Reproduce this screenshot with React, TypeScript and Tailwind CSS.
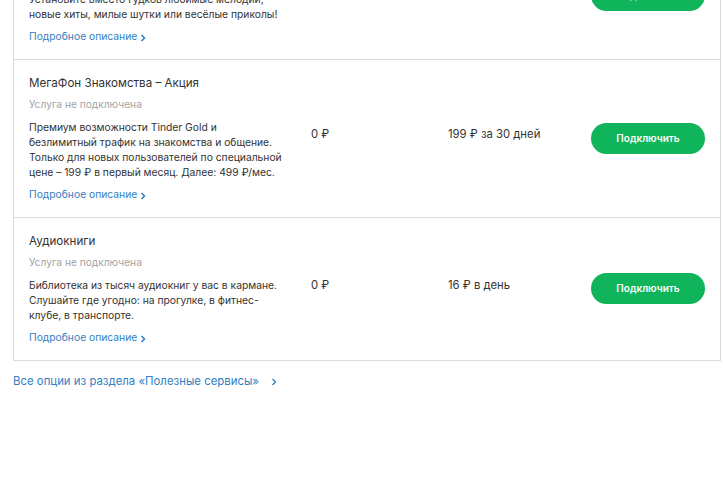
import React from "react";

type Service = {
  title: string;
  lines: string[];
  connect: string;
  fee: string;
};

const services: Service[] = [
  {
    title: "Замени гудок",
    lines: [
      "Установите вместо гудков любимые мелодии,",
      "новые хиты, милые шутки или весёлые приколы!",
    ],
    connect: "0 ₽",
    fee: "1,5 ₽ в день",
  },
  {
    title: "МегаФон Знакомства – Акция",
    lines: [
      "Премиум возможности Tinder Gold и",
      "безлимитный трафик на знакомства и общение.",
      "Только для новых пользователей по специальной",
      "цене – 199 ₽ в первый месяц. Далее: 499 ₽/мес.",
    ],
    connect: "0 ₽",
    fee: "199 ₽ за 30 дней",
  },
  {
    title: "Аудиокниги",
    lines: [
      "Библиотека из тысяч аудиокниг у вас в кармане.",
      "Слушайте где угодно: на прогулке, в фитнес-",
      "клубе, в транспорте.",
    ],
    connect: "0 ₽",
    fee: "16 ₽ в день",
  },
];

const Chevron = () => (
  <svg
    className="inline-block w-[6px] h-[8px] ml-[3px] mb-[-1px]"
    viewBox="0 0 6 8"
    fill="none"
    stroke="currentColor"
  >
    <path d="M1.5 1l3 3-3 3" strokeWidth={1.6} />
  </svg>
);

export default function App() {
  return (
    <div
      className="min-h-screen bg-white text-[#333] overflow-hidden"
      style={{ fontFamily: "Inter, 'Liberation Sans', sans-serif" }}
    >
      {/* Services table */}
      <div className="-mt-[69px] ml-[13px] mr-[2px] border border-[#dcdcdc]">
        {services.map((s, i) => (
          <div
            key={s.title}
            className={`flex items-center px-[15px] pt-[14px] pb-[15px] ${
              i < services.length - 1 ? "border-b border-[#dcdcdc]" : ""
            }`}
          >
            <div className="w-[282px] shrink-0">
              <div className="text-[11.6px] leading-[18px] text-[#333]">{s.title}</div>
              <div className="mt-[4px] text-[10.2px] leading-[16px] text-[#a3a3a3]">
                Услуга не подключена
              </div>
              <p className="mt-[8px] text-[10.3px] leading-[15px] text-[#333] whitespace-nowrap">
                {s.lines.map((l, j) => (
                  <React.Fragment key={j}>
                    {l}
                    {j < s.lines.length - 1 && <br />}
                  </React.Fragment>
                ))}
              </p>
              <a className="block mt-[6px] text-[10.3px] leading-[16px] text-[#3380c2]">
                Подробное описание
                <Chevron />
              </a>
            </div>
            <div className="w-[137px] shrink-0 text-[11.3px] mb-[7px]">{s.connect}</div>
            <div className="w-[143px] shrink-0 text-[11.3px] mb-[7px]">{s.fee}</div>
            <button className="w-[114px] h-[31px] shrink-0 rounded-full bg-[#10b45a] text-white text-[10px] font-semibold">
              Подключить
            </button>
          </div>
        ))}
      </div>

      {/* Footer link */}
      <a className="block mt-[12px] ml-[13px] text-[11.4px] leading-[16px] text-[#3380c2]">
        Все опции из раздела «Полезные сервисы»
        <svg
          className="inline-block w-[6px] h-[8px] ml-[12px] mb-[-1px]"
          viewBox="0 0 6 8"
          fill="none"
          stroke="currentColor"
        >
          <path d="M1.5 1l3 3-3 3" strokeWidth={1.4} />
        </svg>
      </a>
    </div>
  );
}
